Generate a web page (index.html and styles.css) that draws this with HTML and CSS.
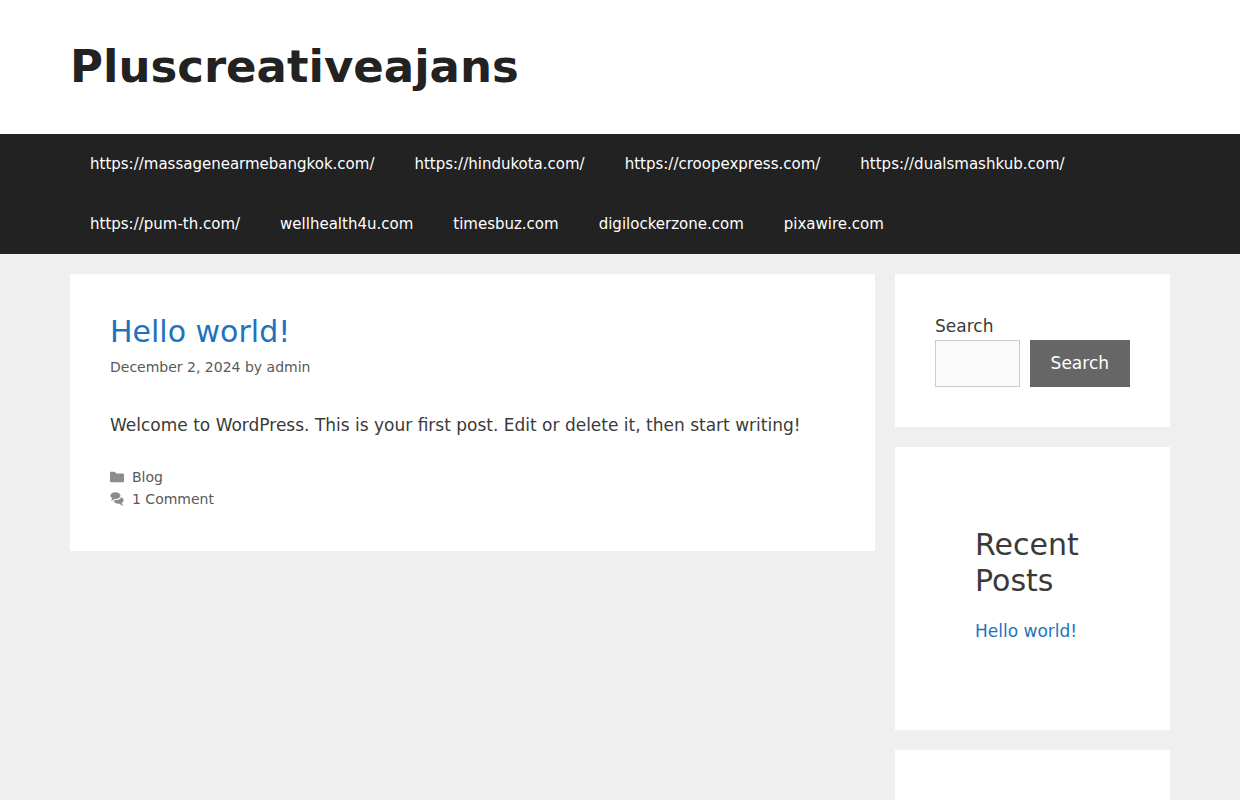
FILE: index.html
```html
<!DOCTYPE html>
<html lang="en">
<head>
<meta charset="utf-8">
<meta name="viewport" content="width=device-width, initial-scale=1">
<title>Pluscreativeajans</title>
<link rel="stylesheet" href="styles.css">
</head>
<body>
<header class="site-header">
  <div class="container header-inner">
    <p class="site-title"><a href="#">Pluscreativeajans</a></p>
  </div>
</header>
<nav class="main-nav" aria-label="Primary">
  <ul class="container menu">
    <li><a href="#">https://massagenearmebangkok.com/</a></li>
    <li><a href="#">https://hindukota.com/</a></li>
    <li><a href="#">https://croopexpress.com/</a></li>
    <li><a href="#">https://dualsmashkub.com/</a></li>
    <li><a href="#">https://pum-th.com/</a></li>
    <li><a href="#">wellhealth4u.com</a></li>
    <li><a href="#">timesbuz.com</a></li>
    <li><a href="#">digilockerzone.com</a></li>
    <li><a href="#">pixawire.com</a></li>
  </ul>
</nav>
<div class="container page">
  <main class="content">
    <article class="card post">
      <h2 class="entry-title"><a href="#">Hello world!</a></h2>
      <div class="entry-meta">December 2, 2024 by <a href="#">admin</a></div>
      <p class="entry-summary">Welcome to WordPress. This is your first post. Edit or delete it, then start writing!</p>
      <footer class="entry-footer">
        <div class="meta-row">
          <svg class="icon" viewBox="0 0 512 512" aria-hidden="true"><path d="M0 112c0-26.510 21.490-48 48-48h110.014a48 48 0 0 1 43.592 27.907l12.349 26.791A16 16 0 0 0 228.486 128H464c26.510 0 48 21.490 48 48v224c0 26.510-21.490 48-48 48H48c-26.510 0-48-21.490-48-48V112z"/></svg>
          <a href="#">Blog</a>
        </div>
        <div class="meta-row">
          <svg class="icon" viewBox="0 0 512 512" aria-hidden="true"><path d="M132.838 329.973a435.298 435.298 0 0 0 16.769-9.004c13.363-7.574 26.587-16.142 37.419-25.507 7.544.597 15.270.925 23.098.925 54.905 0 105.634-15.311 143.285-41.280 23.728-16.365 43.115-37.692 54.155-62.645 54.739 22.205 91.498 63.272 91.498 110.286 0 42.186-29.558 79.498-75.090 102.828 23.460 49.216 75.090 101.709 75.090 101.709s-115.837-38.350-154.424-78.460c-9.956 1.120-20.297 1.758-30.793 1.758-88.727 0-162.927-43.071-181.007-100.610z"/><path d="M383.371 132.502c0 70.603-82.961 127.787-185.216 127.787-10.496 0-20.837-.639-30.793-1.757-38.587 40.093-154.424 78.429-154.424 78.429s51.630-52.472 75.090-101.670c-45.532-23.321-75.090-60.619-75.090-102.790C12.938 61.900 95.900 4.716 198.155 4.716 300.410 4.715 383.370 61.900 383.370 132.502z"/></svg>
          <a href="#">1 Comment</a>
        </div>
      </footer>
    </article>
  </main>
  <aside class="sidebar">
    <section class="card">
      <form class="search">
        <label class="search-label" for="s">Search</label>
        <div class="search-row">
          <input class="search-input" id="s" type="search">
          <button class="search-button" type="submit">Search</button>
        </div>
      </form>
    </section>
    <section class="card">
      <div class="group">
        <h2 class="widget-title">Recent Posts</h2>
        <ul class="post-list"><li><a href="#">Hello world!</a></li></ul>
      </div>
    </section>
    <section class="card">
      <div class="group"></div>
    </section>
  </aside>
</div>
</body>
</html>
```
FILE: styles.css
```css
* { box-sizing: border-box; }

body {
  margin: 0;
  background: #efefef;
  color: #3a3a3a;
  font-family: "DejaVu Sans", sans-serif;
  font-size: 17px;
  line-height: 26px;
}

a { color: #1e73be; text-decoration: none; }
ul { list-style: none; margin: 0; padding: 0; }
h2, p { margin: 0; }

.container { max-width: 1100px; margin: 0 auto; }

.site-header { background: #fff; }
.header-inner { padding: 40px 0; }
.site-title { font-size: 45px; line-height: 54px; font-weight: 700; }
.site-title a { color: #222; }

.main-nav { background: #222; }
.menu { display: flex; flex-wrap: wrap; }
.menu a {
  display: block;
  padding: 0 20px;
  color: #fff;
  font-size: 15px;
  line-height: 60px;
}

.page {
  display: grid;
  grid-template-columns: minmax(0, 805fr) minmax(0, 275fr);
  gap: 20px;
  align-items: start;
  padding: 20px 0;
}
.sidebar { display: grid; grid-template-columns: minmax(0, 1fr); gap: 20px; }
.card { background: #fff; padding: 40px; }

.entry-title { font-size: 30px; line-height: 36px; font-weight: 400; }
.entry-meta { margin-top: 6px; font-size: 14px; line-height: 22px; color: #595959; }
.entry-meta a, .entry-footer a { color: #595959; }
.entry-summary { margin-top: 34px; }
.entry-footer { margin-top: 28px; padding-bottom: 1px; font-size: 14px; line-height: 22px; }
.meta-row { display: flex; align-items: center; gap: 8px; }
.icon { width: 14px; height: 14px; fill: #8c8c8c; }

.search-label { display: block; margin-bottom: 2px; line-height: 24px; }
.search-row { display: flex; gap: 10px; }
.search-input {
  flex: 1;
  min-width: 0;
  height: 47px;
  padding: 10px 15px;
  border: 1px solid #ccc;
  border-radius: 0;
  background: #fafafa;
  color: #666;
  font: inherit;
  appearance: none;
}
.search-button {
  flex: none;
  padding: 10px 21px 11px;
  border: 0;
  background: #666;
  color: #fff;
  font: inherit;
}

.group { padding: 40px; }
.widget-title { margin-bottom: 20px; font-size: 30px; line-height: 36px; font-weight: 400; }
.post-list { margin-bottom: 7px; line-height: 24px; }
```
